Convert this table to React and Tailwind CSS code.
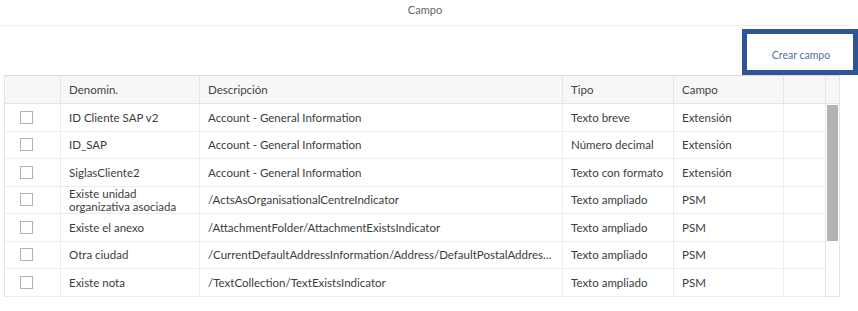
const rows = [
  { name: 'ID Cliente SAP v2', desc: 'Account - General Information', tipo: 'Texto breve', campo: 'Extensión' },
  { name: 'ID_SAP', desc: 'Account - General Information', tipo: 'Número decimal', campo: 'Extensión' },
  { name: 'SiglasCliente2', desc: 'Account - General Information', tipo: 'Texto con formato', campo: 'Extensión' },
  { name: 'Existe unidad organizativa asociada', desc: '/ActsAsOrganisationalCentreIndicator', tipo: 'Texto ampliado', campo: 'PSM' },
  { name: 'Existe el anexo', desc: '/AttachmentFolder/AttachmentExistsIndicator', tipo: 'Texto ampliado', campo: 'PSM' },
  { name: 'Otra ciudad', desc: '/CurrentDefaultAddressInformation/Address/DefaultPostalAddres...', tipo: 'Texto ampliado', campo: 'PSM' },
  { name: 'Existe nota', desc: '/TextCollection/TextExistsIndicator', tipo: 'Texto ampliado', campo: 'PSM' },
]

export default function App() {
  return (
    <div className="w-[858px] h-[311px] bg-white overflow-hidden font-['Lato',sans-serif] text-[#3a3d40]">

      {/* Title bar */}
      <div className="h-[26px] mr-[8px] border-b border-[#ececec] flex items-center justify-center pb-[5px]">
        <span className="text-[11px] text-[#666]">Campo</span>
      </div>

      {/* Toolbar */}
      <div className="flex justify-end mt-[3px] h-[46px]">
        <div className="w-[116px] h-[46px] border-[5px] border-[#2f5597] flex items-center justify-center pt-[8px] pl-[2px]">
          <span className="text-[10.5px] text-[#4f73a8]">Crear campo</span>
        </div>
      </div>

      {/* Table */}
      <div className="ml-[4px] w-[835px]">
        <table className="table-fixed border-collapse text-[11.5px] w-[835px]">
          <colgroup>
            <col className="w-[56px]" />
            <col className="w-[139px]" />
            <col className="w-[363px]" />
            <col className="w-[111px]" />
            <col className="w-[110px]" />
            <col className="w-[42px]" />
            <col className="w-[14px]" />
          </colgroup>
          <thead>
            <tr className="h-[28px] bg-[#f7f7f7] text-[#444]">
              <th className="border border-[#e4e4e4] border-t-[#d9d9d9]"></th>
              <th className="border border-[#e4e4e4] border-t-[#d9d9d9] text-left font-normal px-2">Denomin.</th>
              <th className="border border-[#e4e4e4] border-t-[#d9d9d9] text-left font-normal px-2">Descripción</th>
              <th className="border border-[#e4e4e4] border-t-[#d9d9d9] text-left font-normal px-2">Tipo</th>
              <th className="border border-[#e4e4e4] border-t-[#d9d9d9] text-left font-normal px-2">Campo</th>
              <th className="border border-[#e4e4e4] border-t-[#d9d9d9]"></th>
              <th className="border border-[#e4e4e4] border-t-[#d9d9d9]"></th>
            </tr>
          </thead>
          <tbody>
            {rows.map((r, i) => (
              <tr key={i} className="h-[27.5px]">
                <td className="border border-[#ececec] border-l-[#e4e4e4]">
                  <div className="w-[13px] h-[13px] border border-[#b3b3b3] bg-white ml-[15px]" />
                </td>
                <td className="border border-[#ececec] px-2 leading-[13px]">{r.name}</td>
                <td className="border border-[#ececec] px-2 whitespace-nowrap overflow-hidden">{r.desc}</td>
                <td className="border border-[#ececec] px-2 whitespace-nowrap">{r.tipo}</td>
                <td className="border border-[#ececec] px-2">{r.campo}</td>
                <td className="border border-[#ececec]"></td>
                {i === 0 && (
                  <td rowSpan={rows.length} className="border border-[#e4e4e4] align-top p-0">
                    <div className="ml-[1px] mt-[1px] w-[11px] h-[136px] bg-[#b3b3b3]" />
                  </td>
                )}
              </tr>
            ))}
          </tbody>
        </table>
      </div>
    </div>
  )
}
